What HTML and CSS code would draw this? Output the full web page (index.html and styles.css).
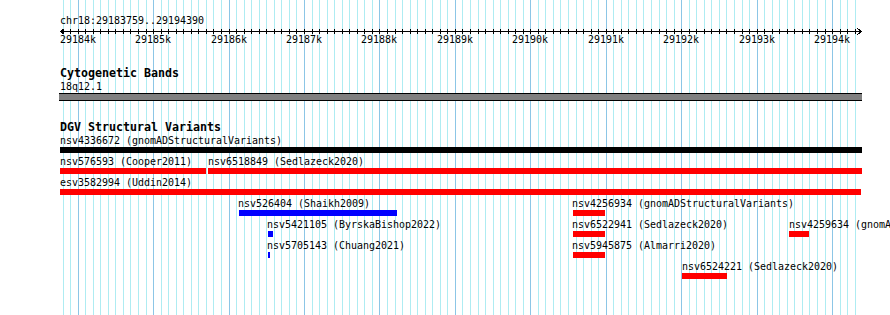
FILE: index.html
```html
<!DOCTYPE html>
<html>
<head>
    <meta charset="utf-8">
    <title>chr18:29183759..29194390</title>
    <link rel="stylesheet" href="styles.css">
</head>
<body>
    <div class="panel">
        <svg class="grid" id="grid" width="890" height="315"></svg>

        <div class="track ruler">
            <div class="locus">chr18:29183759..29194390</div>
            <svg class="scale" id="scale" width="802" height="8"></svg>
            <div class="tick-labels" id="tickLabels"></div>
        </div>

        <div class="track bands">
            <div class="track-title">Cytogenetic Bands</div>
            <div class="band-label">18q12.1</div>
            <div class="band"></div>
        </div>

        <div class="track dgv">
            <div class="track-title">DGV Structural Variants</div>
            <div class="features" id="dgv"></div>
        </div>
    </div>

<script>
const START = 29183759;
const END = 29194390;
const LEFT = 60;
const WIDTH = 802;
const scale = WIDTH / (END - START);
const NS = "http://www.w3.org/2000/svg";

function bpToX(bp) {
    return Math.floor(LEFT + (bp - START) * scale);
}

function rect(svg, x, y, w, h, cls) {
    let r = document.createElementNS(NS, "rect");
    r.setAttribute("x", x);
    r.setAttribute("y", y);
    r.setAttribute("width", w);
    r.setAttribute("height", h);
    r.setAttribute("class", cls);
    svg.appendChild(r);
}

// grid lines + ruler ticks every 100bp
const grid = document.getElementById("grid");
const ruler = document.getElementById("scale");
const tickLabels = document.getElementById("tickLabels");

for (let bp = Math.ceil(START / 100) * 100; bp < END; bp += 100) {
    let x = bpToX(bp);
    let major = bp % 1000 === 0;
    rect(grid, x, 0, 1, 315, major ? "grid-major" : "grid-minor");
    rect(ruler, x - LEFT, 3, 1, 5, "tick");
    if (major) {
        let label = document.createElement("span");
        label.className = "tick-label";
        label.textContent = (bp / 1000) + "k";
        label.style.left = (x - LEFT) + "px";
        tickLabels.appendChild(label);
    }
}

rect(ruler, 0, 5, WIDTH, 1, "tick");
ruler.insertAdjacentHTML("beforeend",
    '<polyline class="arrow" points="4.5,2.5 0.5,5.5 4.5,8.5"/>' +
    '<polyline class="arrow" points="797.5,2.5 801.5,5.5 797.5,8.5"/>');

// DGV features, one array per packed row
const rows = [
    [{x: 60, bx: 60, w: 802, c: "black", t: "nsv4336672 (gnomADStructuralVariants)"}],
    [{x: 60, bx: 60, w: 146, c: "red", t: "nsv576593 (Cooper2011)"},
     {x: 208, bx: 208, w: 654, c: "red", t: "nsv6518849 (Sedlazeck2020)"}],
    [{x: 60, bx: 60, w: 801, c: "red", t: "esv3582994 (Uddin2014)"}],
    [{x: 238, bx: 239, w: 158, c: "blue", t: "nsv526404 (Shaikh2009)"},
     {x: 572, bx: 573, w: 32, c: "red", t: "nsv4256934 (gnomADStructuralVariants)"}],
    [{x: 267, bx: 268, w: 5, c: "blue", t: "nsv5421105 (ByrskaBishop2022)"},
     {x: 572, bx: 573, w: 32, c: "red", t: "nsv6522941 (Sedlazeck2020)"},
     {x: 789, bx: 789, w: 20, c: "red", t: "nsv4259634 (gnomADStructuralVariants)"}],
    [{x: 267, bx: 268, w: 2, c: "blue", t: "nsv5705143 (Chuang2021)"},
     {x: 572, bx: 573, w: 32, c: "red", t: "nsv5945875 (Almarri2020)"}],
    [{x: 682, bx: 682, w: 45, c: "red", t: "nsv6524221 (Sedlazeck2020)"}]
];

document.getElementById("dgv").innerHTML = rows.map(row =>
    `<div class="feature-row">` +
    row.map(f => `<div class="feature" style="left:${f.x - LEFT}px">` +
        `<div class="feature-label">${f.t}</div>` +
        `<div class="bar ${f.c}" style="margin-left:${f.bx - f.x}px;width:${f.w}px"></div>` +
        `</div>`).join("") +
    `</div>`).join("");
</script>
</body>
</html>
```

FILE: styles.css
```css
html, body {
    margin: 0;
    background: #fff;
    overflow: hidden;
}
body {
    font-family: "DejaVu Sans Mono", "Liberation Mono", monospace;
    font-size: 9.97px;
    line-height: 11px;
    color: #000;
}
.panel {
    position: relative;
    width: 890px;
    height: 315px;
    padding-left: 60px;
    box-sizing: border-box;
}
.grid {
    position: absolute;
    left: 0;
    top: 0;
    z-index: 0;
}
.grid-minor {
    fill: #aeecf2;
}
.grid-major {
    fill: #8cc6e6;
}
.track {
    position: relative;
    z-index: 1;
    width: 802px;
}
.locus {
    padding-top: 15px;
    white-space: nowrap;
}
.scale {
    display: block;
    overflow: visible;
    shape-rendering: crispEdges;
}
.tick {
    fill: #000;
}
.arrow {
    fill: none;
    stroke: #000;
    stroke-width: 1;
}
.tick-labels {
    position: relative;
    height: 11px;
}
.tick-label {
    position: absolute;
    top: 0;
    transform: translateX(-50%);
    white-space: nowrap;
}
.track-title {
    font-weight: bold;
    font-size: 11.63px;
    line-height: 13px;
    white-space: nowrap;
}
.bands {
    margin-top: 22px;
}
.band-label {
    margin-top: 1px;
}
.band {
    margin: 1px 0 0 -1px;
    width: 803px;
    height: 6px;
    background: #808080;
    border-top: 1px solid #000;
    border-bottom: 1px solid #000;
}
.dgv {
    margin-top: 20px;
}
.features {
    margin-top: 1px;
}
.feature-row {
    position: relative;
    height: 21px;
}
.feature {
    position: absolute;
    top: 0;
}
.feature-label {
    white-space: nowrap;
}
.bar {
    height: 6px;
    margin-top: 1px;
}
.bar.red {
    background: #ff0000;
}
.bar.blue {
    background: #0000ff;
}
.bar.black {
    background: #000;
}
```
